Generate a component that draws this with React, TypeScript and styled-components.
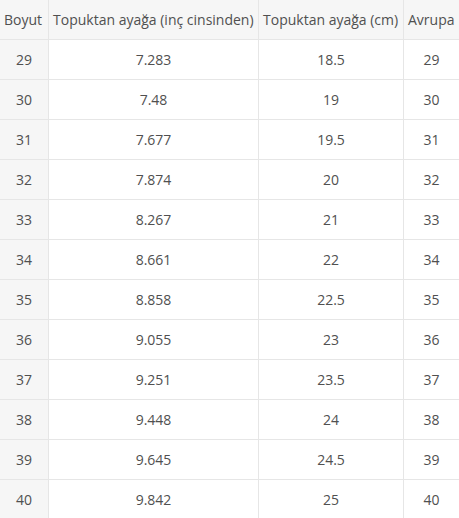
import React from 'react';
import styled, {createGlobalStyle} from 'styled-components';

const rows: [string, string, string, string][] = [
    ['29', '7.283', '18.5', '29'],
    ['30', '7.48', '19', '30'],
    ['31', '7.677', '19.5', '31'],
    ['32', '7.874', '20', '32'],
    ['33', '8.267', '21', '33'],
    ['34', '8.661', '22', '34'],
    ['35', '8.858', '22.5', '35'],
    ['36', '9.055', '23', '36'],
    ['37', '9.251', '23.5', '37'],
    ['38', '9.448', '24', '38'],
    ['39', '9.645', '24.5', '39'],
    ['40', '9.842', '25', '40'],
];

const headers = ['Boyut', 'Topuktan ayağa (inç cinsinden)', 'Topuktan ayağa (cm)', 'Avrupa'];
const widths = [48, 210, 145, 56];

const App = () => {
    return (
        <>
            <GlobalStyle/>
            <SizeTable>
                <colgroup>
                    {widths.map((w, i) => <col key={i} style={{width: w}}/>)}
                </colgroup>
                <thead>
                <tr>
                    {headers.map((h, i) => <HeadCell key={h} $first={i === 0}>{h}</HeadCell>)}
                </tr>
                </thead>
                <tbody>
                {rows.map(r => (
                    <tr key={r[0]}>
                        {r.map((v, i) => <Cell key={i} $first={i === 0}>{v}</Cell>)}
                    </tr>
                ))}
                </tbody>
            </SizeTable>
        </>
    );
};

export default App;

const GlobalStyle = createGlobalStyle`
  body {
    margin: 0;
    background: #fff;
    font-family: "Open Sans", "Liberation Sans", sans-serif;
  }
`

const SizeTable = styled.table`
  width: 459px;
  table-layout: fixed;
  border-collapse: separate;
  border-spacing: 0;
  font-size: 14px;
  color: #505050;
`

const HeadCell = styled.th<{ $first?: boolean }>`
  box-sizing: border-box;
  height: 40px;
  padding: 0 4px;
  background: #f6f6f6;
  font-weight: 400;
  text-align: left;
  white-space: nowrap;
  border-bottom: 1px solid #e6e6e6;
  border-left: ${p => p.$first ? 'none' : '1px solid #e6e6e6'};
`

const Cell = styled.td<{ $first?: boolean }>`
  box-sizing: border-box;
  height: 40px;
  padding: 0 4px;
  text-align: center;
  background: ${p => p.$first ? '#f6f6f6' : '#fff'};
  border-bottom: 1px solid #e6e6e6;
  border-left: ${p => p.$first ? 'none' : '1px solid #e6e6e6'};
`
